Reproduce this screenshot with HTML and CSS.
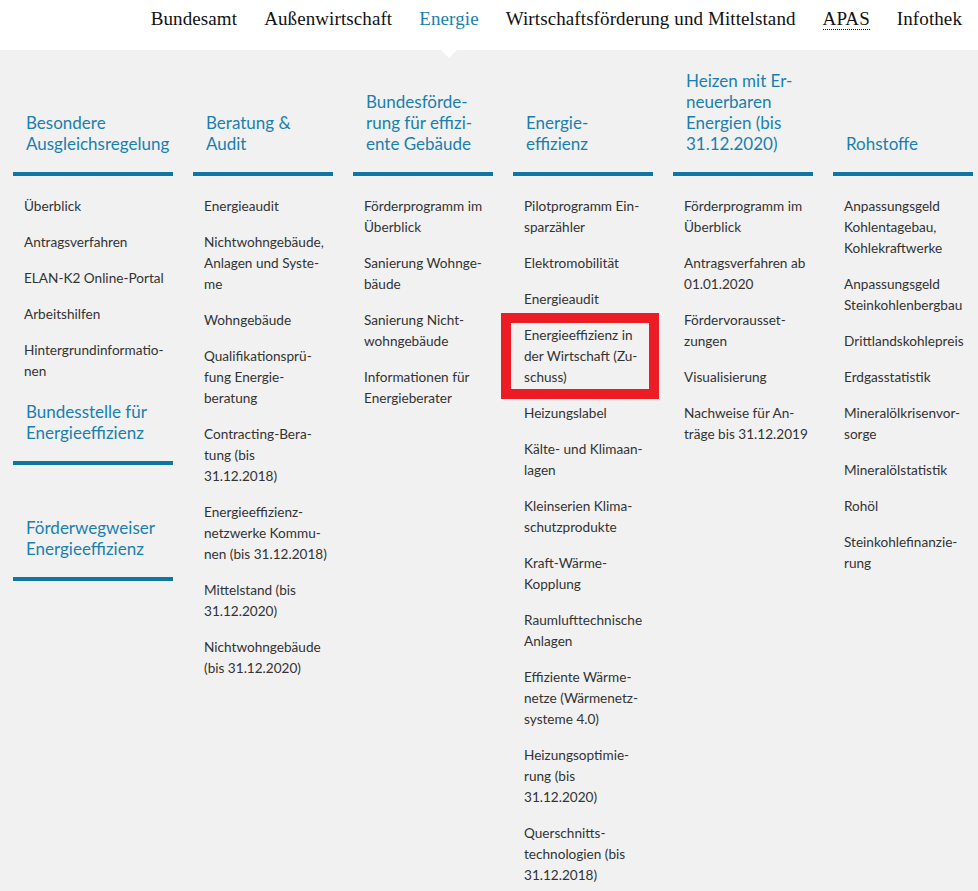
FILE: index.html
```html
<!DOCTYPE html>
<html lang="de">
<head>
<meta charset="utf-8">
<title>BAFA – Energie</title>
<link rel="stylesheet" href="styles.css">
</head>
<body>
<header class="topbar">
  <nav class="mainnav">
    <a class="nav-link" href="#">Bundesamt</a>
    <a class="nav-link" href="#">Außenwirtschaft</a>
    <a class="nav-link is-active" href="#">Energie</a>
    <a class="nav-link" href="#">Wirtschaftsförderung und Mittelstand</a>
    <a class="nav-link" href="#"><abbr class="nav-abbr" title="Abschlussprüferaufsichtsstelle">APAS</abbr></a>
    <a class="nav-link" href="#">Infothek</a>
  </nav>
</header>

<div class="megamenu">
  <div class="menu-grid">
    <div class="menu-col menu-col--first">
      <section class="menu-section">
        <h3 class="menu-heading"><a href="#">Besondere<br>Ausgleichsregelung</a></h3>
        <ul class="menu-list">
          <li><a href="#">Überblick</a></li>
          <li><a href="#">Antragsverfahren</a></li>
          <li><a href="#">ELAN-K2 Online-Portal</a></li>
          <li><a href="#">Arbeitshilfen</a></li>
          <li><a href="#">Hintergrundinformatio-<br>nen</a></li>
        </ul>
      </section>
      <section class="menu-section">
        <h3 class="menu-heading menu-heading--sub"><a href="#">Bundesstelle für<br>Energieeffizienz</a></h3>
      </section>
      <section class="menu-section">
        <h3 class="menu-heading menu-heading--sub menu-heading--spaced"><a href="#">Förderwegweiser<br>Energieeffizienz</a></h3>
      </section>
    </div>

    <div class="menu-col">
      <section class="menu-section">
        <h3 class="menu-heading"><a href="#">Beratung &amp;<br>Audit</a></h3>
        <ul class="menu-list">
          <li><a href="#">Energieaudit</a></li>
          <li><a href="#">Nichtwohngebäude,<br>Anlagen und Syste-<br>me</a></li>
          <li><a href="#">Wohngebäude</a></li>
          <li><a href="#">Qualifikationsprü-<br>fung Energie-<br>beratung</a></li>
          <li><a href="#">Contracting-Bera-<br>tung (bis<br>31.12.2018)</a></li>
          <li><a href="#">Energieeffizienz-<br>netzwerke Kommu-<br>nen (bis 31.12.2018)</a></li>
          <li><a href="#">Mittelstand (bis<br>31.12.2020)</a></li>
          <li><a href="#">Nichtwohngebäude<br>(bis 31.12.2020)</a></li>
        </ul>
      </section>
    </div>

    <div class="menu-col">
      <section class="menu-section">
        <h3 class="menu-heading"><a href="#">Bundesförde-<br>rung für effizi-<br>ente Gebäude</a></h3>
        <ul class="menu-list">
          <li><a href="#">Förderprogramm im<br>Überblick</a></li>
          <li><a href="#">Sanierung Wohnge-<br>bäude</a></li>
          <li><a href="#">Sanierung Nicht-<br>wohngebäude</a></li>
          <li><a href="#">Informationen für<br>Energieberater</a></li>
        </ul>
      </section>
    </div>

    <div class="menu-col">
      <section class="menu-section">
        <h3 class="menu-heading"><a href="#">Energie-<br>effizienz</a></h3>
        <ul class="menu-list">
          <li><a href="#">Pilotprogramm Ein-<br>sparzähler</a></li>
          <li><a href="#">Elektromobilität</a></li>
          <li><a href="#">Energieaudit</a></li>
          <li><a href="#">Energieeffizienz in<br>der Wirtschaft (Zu-<br>schuss)</a></li>
          <li><a href="#">Heizungslabel</a></li>
          <li><a href="#">Kälte- und Klimaan-<br>lagen</a></li>
          <li><a href="#">Kleinserien Klima-<br>schutzprodukte</a></li>
          <li><a href="#">Kraft-Wärme-<br>Kopplung</a></li>
          <li><a href="#">Raumlufttechnische<br>Anlagen</a></li>
          <li><a href="#">Effiziente Wärme-<br>netze (Wärmenetz-<br>systeme 4.0)</a></li>
          <li><a href="#">Heizungsoptimie-<br>rung (bis<br>31.12.2020)</a></li>
          <li><a href="#">Querschnitts-<br>technologien (bis<br>31.12.2018)</a></li>
        </ul>
      </section>
    </div>

    <div class="menu-col">
      <section class="menu-section">
        <h3 class="menu-heading"><a href="#">Heizen mit Er-<br>neuerbaren<br>Energien (bis<br>31.12.2020)</a></h3>
        <ul class="menu-list">
          <li><a href="#">Förderprogramm im<br>Überblick</a></li>
          <li><a href="#">Antragsverfahren ab<br>01.01.2020</a></li>
          <li><a href="#">Fördervorausset-<br>zungen</a></li>
          <li><a href="#">Visualisierung</a></li>
          <li><a href="#">Nachweise für An-<br>träge bis 31.12.2019</a></li>
        </ul>
      </section>
    </div>

    <div class="menu-col">
      <section class="menu-section">
        <h3 class="menu-heading"><a href="#">Rohstoffe</a></h3>
        <ul class="menu-list">
          <li><a href="#">Anpassungsgeld<br>Kohlentagebau,<br>Kohlekraftwerke</a></li>
          <li><a href="#">Anpassungsgeld<br>Steinkohlenbergbau</a></li>
          <li><a href="#">Drittlandskohlepreis</a></li>
          <li><a href="#">Erdgasstatistik</a></li>
          <li><a href="#">Mineralölkrisenvor-<br>sorge</a></li>
          <li><a href="#">Mineralölstatistik</a></li>
          <li><a href="#">Rohöl</a></li>
          <li><a href="#">Steinkohlefinanzie-<br>rung</a></li>
        </ul>
      </section>
    </div>
  </div>
  <div class="highlight-box" aria-hidden="true"></div>
</div>
</body>
</html>
```

FILE: styles.css
```css
html, body {
  margin: 0;
  padding: 0;
}

body {
  background: #f1f1f1;
  font-family: Lato, "Open Sans", sans-serif;
  min-height: 891px;
}

a {
  text-decoration: none;
  color: inherit;
}

/* ---------- top navigation ---------- */
.topbar {
  background: #ffffff;
  height: 50px;
  position: relative;
  z-index: 2;
}

.mainnav {
  display: flex;
  justify-content: flex-end;
  gap: 27px;
  padding-right: 16px;
  height: 50px;
}

.nav-link {
  position: relative;
  box-sizing: border-box;
  height: 50px;
  padding-top: 8px;
  font-family: "Liberation Serif", "Times New Roman", serif;
  font-size: 19px;
  line-height: 22px;
  letter-spacing: 0.1px;
  color: #111111;
  white-space: nowrap;
}

.nav-link.is-active {
  color: #1a7fae;
}

.nav-link.is-active::after {
  content: "";
  position: absolute;
  top: 100%;
  left: 50%;
  margin-left: -8px;
  border-left: 8px solid transparent;
  border-right: 8px solid transparent;
  border-top: 8px solid #ffffff;
}

.nav-abbr {
  text-decoration: none;
  border-bottom: 1px dotted #111111;
}

/* ---------- mega menu ---------- */
.megamenu {
  position: relative;
  padding: 20px 0 0 13px;
}

.menu-grid {
  display: grid;
  grid-template-columns: repeat(6, 160px);
  align-items: start;
}

.menu-col {
  padding-left: 20px;
}

.menu-col--first {
  padding-left: 0;
}

.menu-section {
  margin: 0;
}

.menu-heading {
  box-sizing: border-box;
  display: flex;
  align-items: flex-end;
  height: 106px;
  margin: 0;
  padding: 0 0 18px 13px;
  border-bottom: 4px solid #0f76a3;
  font-size: 17px;
  font-weight: normal;
  line-height: 21px;
  color: #1a7fae;
  white-space: nowrap;
}

.menu-heading--sub {
  height: auto;
  margin-top: 19px;
}

.menu-heading--spaced {
  margin-top: 52px;
}

.menu-list {
  list-style: none;
  margin: 20px 0 0;
  padding: 0 0 0 11px;
}

.menu-list li {
  margin-bottom: 15px;
  font-size: 13.6px;
  line-height: 21px;
  color: #333333;
  white-space: nowrap;
}

.menu-list li:last-child {
  margin-bottom: 0;
}

/* red annotation frame */
.highlight-box {
  position: absolute;
  left: 501px;
  top: 263px;
  width: 158px;
  height: 86px;
  box-sizing: border-box;
  border: 10px solid #ec1c24;
  pointer-events: none;
}
```
